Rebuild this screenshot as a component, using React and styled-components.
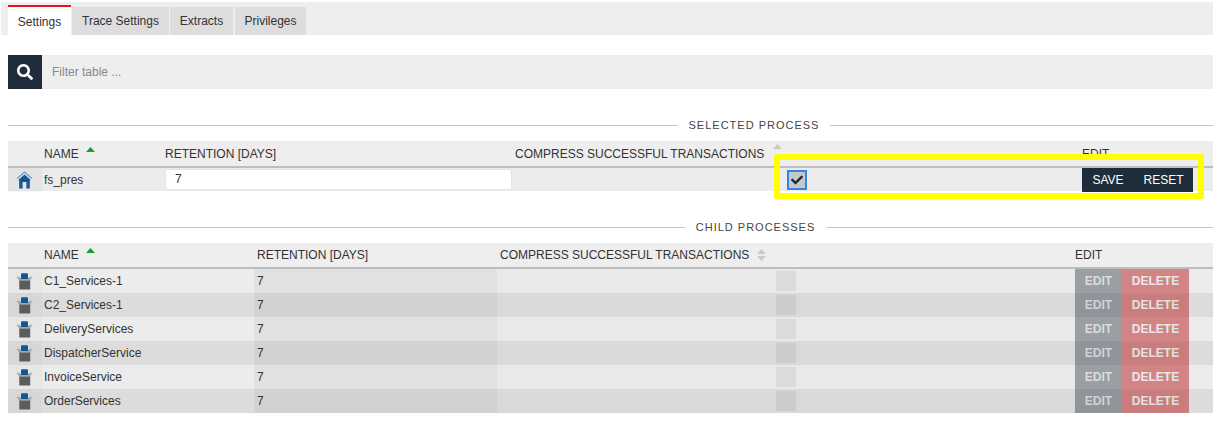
import React from 'react';
import styled, { createGlobalStyle } from 'styled-components';
import { FaSearch, FaCheck } from 'react-icons/fa';

const GlobalStyle = createGlobalStyle`
  html, body {
    margin: 0;
    background: #ffffff;
    font-family: "Liberation Sans", Arial, sans-serif;
    font-size: 12px;
    color: #333333;
  }
  * {
    box-sizing: border-box;
  }
`;

const Page = styled.div`
  width: 1213px;
  height: 437px;
  padding: 2px 0 0 8px;
  overflow: hidden;
`;

const TabBar = styled.div`
  display: flex;
  align-items: flex-end;
  gap: 1px;
  height: 33px;
  margin-left: -7px;
  padding-left: 7px;
  background: #eeeeee;
`;

const Tab = styled.div`
  display: flex;
  align-items: center;
  justify-content: center;
  width: ${props => props.$width}px;
  height: ${props => (props.$active ? 30 : 28)}px;
  margin-right: ${props => props.$gap || 0}px;
  padding-top: ${props => (props.$active ? 2 : 0)}px;
  background: ${props => (props.$active ? '#ffffff' : '#dddddd')};
  border-top: ${props => (props.$active ? '2px solid #e0141c' : 'none')};
  color: #333333;
`;

const FilterBar = styled.div`
  display: flex;
  height: 34px;
  margin-top: 20px;
  background: #eeeeee;
`;

const SearchButton = styled.div`
  display: flex;
  align-items: center;
  justify-content: center;
  width: 34px;
  background: #1f2d3a;
  color: #ffffff;
  font-size: 16px;
`;

const FilterInput = styled.input`
  flex: 1;
  padding: 0 0 0 10px;
  border: none;
  outline: none;
  background: transparent;
  font-family: inherit;
  font-size: 12px;

  &::placeholder {
    color: #888888;
    opacity: 1;
  }
`;

const SectionTitle = styled.div`
  display: flex;
  align-items: center;
  gap: 11px;
  height: 14px;
  margin-top: 29px;
  font-size: 11px;
  letter-spacing: 1px;
  color: #444444;

  &::before, &::after {
    content: '';
    height: 1px;
    background: #c4c4c4;
  }
  &::before {
    flex: 1.75 1 0;
  }
  &::after {
    flex: 1 1 0;
  }
`;

const Table = styled.div`
  position: relative;
  margin-top: ${props => props.$top}px;
`;

const Row = styled.div`
  display: grid;
  grid-template-columns: ${props => props.$cols};
  height: ${props => props.$height}px;
  background: ${props => (props.$even ? '#dcdcdc' : '#ececec')};
`;

const HeaderRow = styled(Row)`
  background: #eeeeee;
  border-bottom: 2px solid #bdbdbd;
`;

const HeaderCell = styled.div`
  display: flex;
  align-items: center;
  padding-left: ${props => props.$pad || 0}px;
  color: #333333;
  white-space: nowrap;
`;

const Cell = styled.div`
  display: flex;
  align-items: center;
  justify-content: ${props => (props.$center ? 'center' : 'flex-start')};
  padding-left: ${props => props.$pad || 0}px;
  padding-right: ${props => props.$padRight || 0}px;
  background: rgba(0, 0, 0, ${props => props.$tone || 0});
`;

const IconCell = styled(Cell)`
  padding-left: 8px;
`;

const RetentionInput = styled.input`
  width: 347px;
  height: 21px;
  margin-top: -2px;
  padding: 0 0 0 9px;
  border: 1px solid #e4e4e4;
  outline: none;
  background: #ffffff;
  font-family: inherit;
  font-size: 12px;
  color: #333333;
`;

const CheckBox = styled.div`
  display: flex;
  align-items: center;
  justify-content: center;
  width: 20px;
  height: 20px;
  background: ${props => (props.$checked ? '#c8c8c8' : 'rgba(0, 0, 0, 0.06)')};
  border: ${props => (props.$checked ? '2px solid #2b87e8' : 'none')};
  color: #1f2d3a;
  font-size: 12px;
`;

const ButtonGroup = styled.div`
  display: flex;
  height: ${props => props.$height}px;
`;

const ActionButton = styled.div`
  display: flex;
  align-items: center;
  justify-content: center;
  width: ${props => props.$width}px;
  background: ${props => props.$color};
  color: ${props => props.$text || '#ffffff'};
  opacity: ${props => props.$opacity || 1};
  font-weight: ${props => (props.$bold ? 'bold' : 'normal')};
`;

const Highlight = styled.div`
  position: absolute;
  top: 13px;
  left: 766px;
  width: 430px;
  height: 45px;
  border: 6px solid #ffff00;
  border-radius: 2px;
  pointer-events: none;
`;

const SortCaret = styled.svg`
  width: 9px;
  height: 14px;
  margin-left: ${props => props.$gap}px;
  margin-top: -8px;
  flex: none;
`;

const SortUpDown = styled.svg`
  width: 9px;
  height: 14px;
  margin-left: ${props => props.$gap}px;
  margin-top: ${props => (props.$upOnly ? -8 : 0)}px;
  flex: none;
`;

const Ascending = ({ gap }) => (
  <SortCaret $gap={gap} viewBox="0 0 9 14">
    <path d="M4.5 4 L9 9 L0 9 Z" fill="#1f9a2e" />
  </SortCaret>
);

const Unsorted = ({ gap, upOnly }) => (
  <SortUpDown $gap={gap} $upOnly={upOnly} viewBox="0 0 9 14">
    <path d="M4.5 1 L9 6 L0 6 Z" fill="#c9c9c9" />
    {!upOnly && <path d="M4.5 13 L9 8 L0 8 Z" fill="#c9c9c9" />}
  </SortUpDown>
);

const HomeIcon = () => (
  <svg width="17" height="18" viewBox="0 0 17 18">
    <path d="M1.2 7.4 L8.5 1 L15.8 7.4" fill="none" stroke="#6b9bcb" strokeWidth="1.3" />
    <path
      d="M8.5 3.6 L14.6 9 L13.8 9.8 V17.5 H10.4 V11 H6.6 V17.5 H3.2 V9.8 L2.4 9 Z"
      fill="#14568f"
    />
  </svg>
);

const BoxIcon = () => (
  <svg width="17" height="17" viewBox="0 0 17 17">
    <path d="M0.3 3 L5 5 L5 7.5 L3 7.5 Z" fill="#a4a4a4" />
    <path d="M16.7 3 L12 5 L12 7.5 L14 7.5 Z" fill="#a4a4a4" />
    <path d="M5 1.5 Q5 0.3 6.2 0.3 H10.8 Q12 0.3 12 1.5 V6 H5 Z" fill="#14569c" />
    <path d="M3 6 H14.5 V7.5 H3 Z" fill="#a8a8a8" />
    <path d="M3.3 7.5 H14.2 V16.5 H3.3 Z" fill="#5c5c5c" />
  </svg>
);

const childProcesses = [
  'C1_Services-1',
  'C2_Services-1',
  'DeliveryServices',
  'DispatcherService',
  'InvoiceService',
  'OrderServices',
];

const selectedCols = '34px 123px 350px 567px 1fr';
const childCols = '34px 212px 243px 578px 1fr';

const App = () => {
  return (
    <Page>
      <GlobalStyle />
      <TabBar>
        <Tab $active $width={63}>Settings</Tab>
        <Tab $width={97}>Trace Settings</Tab>
        <Tab $width={63} $gap={1}>Extracts</Tab>
        <Tab $width={71}>Privileges</Tab>
      </TabBar>

      <FilterBar>
        <SearchButton><FaSearch /></SearchButton>
        <FilterInput placeholder="Filter table ..." />
      </FilterBar>

      <SectionTitle>SELECTED PROCESS</SectionTitle>
      <Table $top={9}>
        <HeaderRow $cols={selectedCols} $height={27}>
          <HeaderCell />
          <HeaderCell $pad={2}>NAME<Ascending gap={7} /></HeaderCell>
          <HeaderCell>RETENTION [DAYS]</HeaderCell>
          <HeaderCell>COMPRESS SUCCESSFUL TRANSACTIONS<Unsorted gap={9} upOnly /></HeaderCell>
          <HeaderCell>EDIT</HeaderCell>
        </HeaderRow>
        <Row $cols={selectedCols} $height={23}>
          <IconCell $tone={0.03}><HomeIcon /></IconCell>
          <Cell $pad={2}>fs_pres</Cell>
          <Cell><RetentionInput defaultValue="7" /></Cell>
          <Cell $center $padRight={3}>
            <CheckBox $checked><FaCheck /></CheckBox>
          </Cell>
          <Cell>
            <ButtonGroup $height={24}>
              <ActionButton $width={52} $color="#1f2d3a">SAVE</ActionButton>
              <ActionButton $width={59} $color="#1f2d3a">RESET</ActionButton>
            </ButtonGroup>
          </Cell>
        </Row>
        <Highlight />
      </Table>

      <SectionTitle>CHILD PROCESSES</SectionTitle>
      <Table $top={9}>
        <HeaderRow $cols={childCols} $height={26}>
          <HeaderCell />
          <HeaderCell $pad={2}>NAME<Ascending gap={7} /></HeaderCell>
          <HeaderCell $pad={3}>RETENTION [DAYS]</HeaderCell>
          <HeaderCell $pad={3}>COMPRESS SUCCESSFUL TRANSACTIONS<Unsorted gap={8} /></HeaderCell>
          <HeaderCell>EDIT</HeaderCell>
        </HeaderRow>
        {childProcesses.map((name, index) => (
          <Row key={name} $cols={childCols} $height={24} $even={index % 2 === 1}>
            <IconCell $tone={0.02}><BoxIcon /></IconCell>
            <Cell $pad={2}>{name}</Cell>
            <Cell $pad={3} $tone={0.045}>7</Cell>
            <Cell $center $tone={0.01}><CheckBox /></Cell>
            <Cell>
              <ButtonGroup $height={24}>
                <ActionButton $width={47} $color="#1f2d3a" $text="#c4c4c4" $opacity={0.4} $bold>EDIT</ActionButton>
                <ActionButton $width={67} $color="#bc2023" $text="#e4e4e4" $opacity={0.5} $bold>DELETE</ActionButton>
              </ButtonGroup>
            </Cell>
          </Row>
        ))}
      </Table>
    </Page>
  );
};

export default App;
